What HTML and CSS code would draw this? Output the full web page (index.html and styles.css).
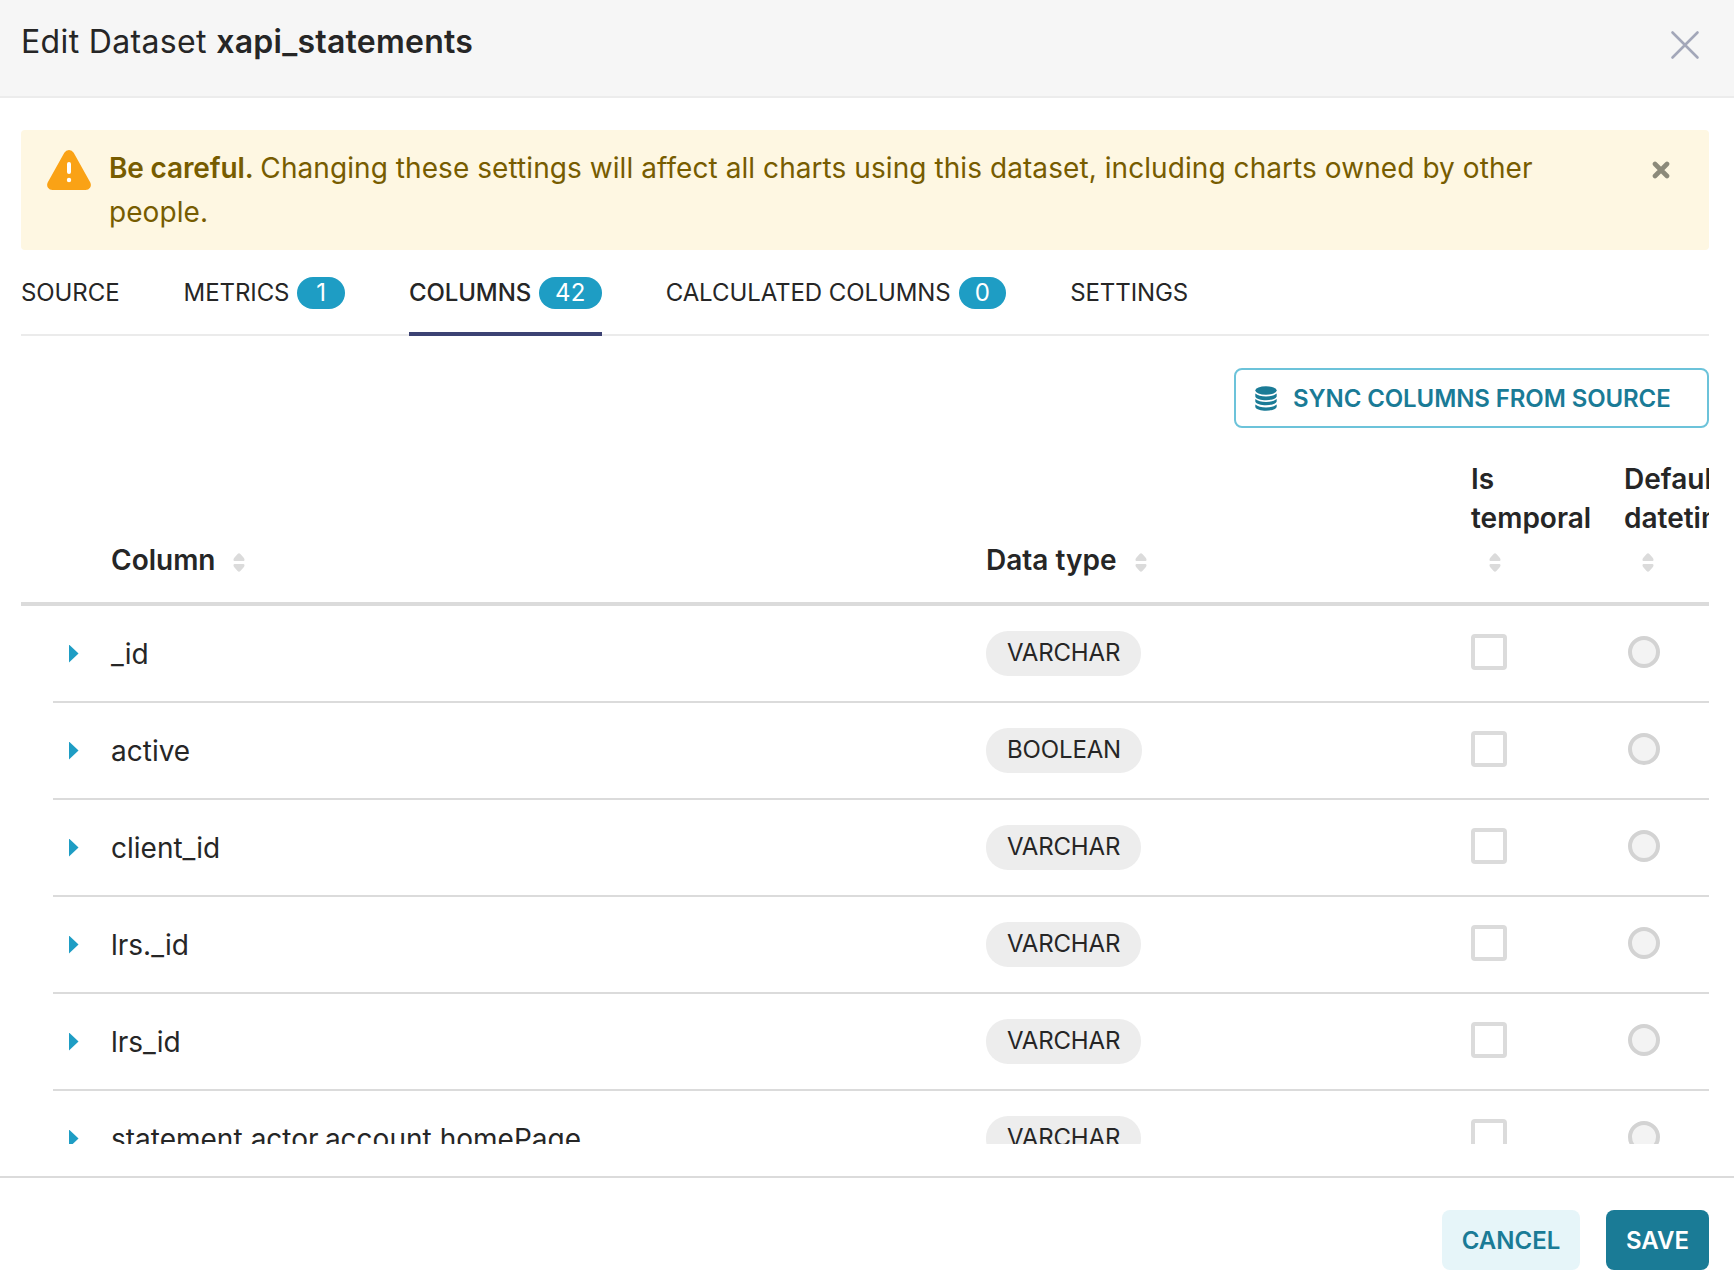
FILE: index.html
```html
<!DOCTYPE html>
<html lang="en">
<head>
<meta charset="utf-8">
<title>Edit Dataset xapi_statements</title>
<link rel="stylesheet" href="styles.css">
</head>
<body>
<svg class="defs" width="0" height="0">
  <symbol id="sorter" viewBox="0 0 12 20">
    <path d="M1.500 9C.6 9 .5 8 .5 7.400Q.6 6.500 1.500 5.500L4.600 2Q6 .7 7.400 2L10.500 5.500Q11.400 6.500 11.500 7.400C11.500 8 11.400 9 10.500 9ZM1.500 12C.6 12 .5 13 .5 13.600Q.6 14.500 1.500 15.500L4.600 19Q6 20.300 7.400 19L10.500 15.500Q11.400 14.500 11.500 13.600C11.500 13 11.400 12 10.500 12Z"/>
  </symbol>
</svg>
<main class="modal">
  <header class="modal-header">
    <h1 class="title">Edit Dataset <strong>xapi_statements</strong></h1>
    <button class="close" aria-label="Close">
      <svg width="30" height="30" viewBox="0 0 30 30"><path d="M2.500 2.500L27.500 27.500M27.500 2.500L2.500 27.500"/></svg>
    </button>
  </header>
  <section class="modal-body">
    <div class="alert">
      <svg class="alert-icon" width="44" height="40" viewBox="0 0 44 40">
        <path class="alert-shape" d="M17.300 2.800Q19 0 22 0T26.700 2.800L43.300 32.500Q44.600 35.500 43 37.800Q41.500 40 38.500 40H5.500Q2.500 40 1 37.800Q-.6 35.500 .7 32.500Z"/>
        <rect class="alert-mark" x="20" y="12" width="4" height="12" rx="2"/><circle class="alert-mark" cx="22" cy="30" r="2.200"/>
      </svg>
      <p class="alert-text"><strong>Be careful.</strong> Changing these settings will affect all charts using this dataset, including charts owned by other people.</p>
      <button class="alert-close" aria-label="Dismiss">
        <svg width="18" height="18" viewBox="0 0 18 18"><path d="M3 3L15 15M15 3L3 15"/></svg>
      </button>
    </div>
    <nav class="tabs">
      <a class="tab">SOURCE</a>
      <a class="tab">METRICS<span class="badge one">1</span></a>
      <a class="tab active">COLUMNS<span class="badge">42</span></a>
      <a class="tab">CALCULATED COLUMNS<span class="badge one">0</span></a>
      <a class="tab">SETTINGS</a>
    </nav>
    <div class="toolbar">
      <button class="btn sync">
        <svg width="22" height="25" viewBox="0 0 22 25"><ellipse cx="11" cy="4.500" rx="10.700" ry="4.200"/><path d="M.3 7.500Q4 10.500 11 10.500T21.700 7.500V10.500C20 15.500 2 15.500 .3 10.500ZM.3 13Q4 16 11 16T21.700 13V15.500C20 20.500 2 20.500 .3 15.500ZM.3 18.500Q4 21.500 11 21.500T21.700 18.500V21C20 26 2 26 .3 21Z"/></svg>
        <span>SYNC COLUMNS FROM SOURCE</span>
      </button>
    </div>
    <div class="table">
      <div class="row head">
        <span></span>
        <div class="th">Column<svg class="sort"><use href="#sorter"/></svg></div>
        <div class="th">Data type<svg class="sort wide"><use href="#sorter"/></svg></div>
        <div class="th stacked"><span>Is</span><span>temporal</span><svg class="sort"><use href="#sorter"/></svg></div>
        <div class="th stacked"><span>Default</span><span>datetime</span><svg class="sort"><use href="#sorter"/></svg></div>
      </div>
      <div class="row"><i class="caret"></i><span class="name">_id</span><span class="tag">VARCHAR</span><i class="check"></i><i class="radio"></i></div>
      <div class="row"><i class="caret"></i><span class="name">active</span><span class="tag">BOOLEAN</span><i class="check"></i><i class="radio"></i></div>
      <div class="row"><i class="caret"></i><span class="name">client_id</span><span class="tag">VARCHAR</span><i class="check"></i><i class="radio"></i></div>
      <div class="row"><i class="caret"></i><span class="name">lrs._id</span><span class="tag">VARCHAR</span><i class="check"></i><i class="radio"></i></div>
      <div class="row"><i class="caret"></i><span class="name">lrs_id</span><span class="tag">VARCHAR</span><i class="check"></i><i class="radio"></i></div>
      <div class="row"><i class="caret"></i><span class="name">statement.actor.account.homePage</span><span class="tag">VARCHAR</span><i class="check"></i><i class="radio"></i></div>
    </div>
  </section>
  <footer class="modal-footer">
    <button class="btn cancel">CANCEL</button>
    <button class="btn save">SAVE</button>
  </footer>
</main>
</body>
</html>
```
FILE: styles.css
```css
* { box-sizing: border-box; }
body {
  margin: 0;
  background: #fff;
  color: #262626;
  font-family: Inter, "Liberation Sans", sans-serif;
  font-size: 28px;
}
button { font: inherit; border: 0; background: none; padding: 0; margin: 0; }
svg { display: block; flex: none; }
.defs { position: absolute; }

.modal { height: 1288px; display: flex; flex-direction: column; overflow: hidden; }
.modal-header {
  flex: none;
  height: 98px;
  padding: 0 34px 0 21px;
  display: flex;
  justify-content: space-between;
  align-items: flex-start;
  background: #f6f6f6;
  border-bottom: 2px solid #ececec;
}
.title { margin: 22px 0 0; font-size: 32px; line-height: 40px; font-weight: 400; letter-spacing: .35px; }
.title strong { font-weight: 600; letter-spacing: .25px; }
.close { margin-top: 30px; }
.close path { stroke: #a3a7b9; stroke-width: 2.600; stroke-linecap: round; }

.modal-body {
  flex: none;
  height: 1046px;
  padding: 32px 25px 0 21px;
  overflow: hidden;
}
.alert {
  height: 120px;
  padding: 16px 39px 0 26px;
  display: flex;
  align-items: flex-start;
  border-radius: 4px;
  background: #fef7e2;
  color: #775c00;
}
.alert-icon { margin-top: 4px; }
.alert-shape { fill: #faa215; }
.alert-mark { fill: #fff; }
.alert-text { margin: 0 0 0 18px; width: 1480px; line-height: 44px; letter-spacing: .07px; }
.alert-text strong { font-weight: 600; letter-spacing: -.15px; margin-right: -1px; }
.alert-close { margin: 15px 0 0 auto; }
.alert-close path { stroke: #8c8a7a; stroke-width: 4.600; stroke-linecap: round; }

.tabs {
  height: 86px;
  display: flex;
  gap: 64px;
  border-bottom: 2px solid #ebebeb;
  font-size: 24px;
  letter-spacing: -.08px;
}
.tab { height: 86px; padding: 1px 0 2px; display: flex; align-items: center; white-space: nowrap; }
.tab.active { padding: 3px 0 0; font-weight: 500; letter-spacing: -.1px; border-bottom: 4px solid #3c4273; }
.badge {
  margin-left: 8px;
  height: 32px;
  padding: 0 16px;
  border-radius: 16px;
  background: #1e9dc4;
  color: #fff;
  font-weight: 400;
  letter-spacing: .2px;
  line-height: 32px;
}
.badge.one { width: 47.5px; text-align: center; }

.toolbar { height: 92px; padding-top: 32px; display: flex; justify-content: flex-end; }
.btn { height: 60px; border-radius: 8px; font-size: 24px; font-weight: 600; color: #1a7b96; }
.sync {
  width: 475px;
  padding-left: 19px;
  display: flex;
  align-items: center;
  gap: 16px;
  border: 2px solid #6cc3da;
  letter-spacing: -.1px;
  white-space: nowrap;
}
.sync svg { fill: #1a7b96; }

.table { overflow: hidden; }
.row {
  height: 97px;
  margin-left: 32px;
  padding-left: 16px;
  display: grid;
  grid-template-columns: 42px 875px 485px 153px 200px;
  align-items: center;
  border-bottom: 2px solid #dbdbdb;
}
.head {
  height: 178px;
  margin-left: 0;
  padding: 0 0 22px 48px;
  border-bottom-width: 4px;
  align-items: end;
  font-weight: 600;
}
.th { display: flex; align-items: center; line-height: 39px; }
.sort { width: 12px; height: 20px; margin: 3px 0 0 17px; fill: #dbdbdb; }
.sort.wide { margin-left: 19px; }
.stacked { flex-direction: column; align-items: flex-start; }
.stacked .sort { margin: 14px 0 8px 18px; }
.caret {
  width: 9.5px;
  height: 18px;
  background: #1e9dc4;
  clip-path: polygon(0 0, 100% 50%, 0 100%);
}
.tag {
  justify-self: start;
  height: 45px;
  padding: 0 21px;
  border-radius: 22px;
  background: #ededed;
  font-size: 24px;
  letter-spacing: -.15px;
  line-height: 43px;
}
.check { width: 36px; height: 36px; margin-bottom: 3px; border: 4px solid #dbdbdb; border-radius: 4px; }
.radio { width: 32px; height: 32px; margin: 0 0 3px 4px; border: 4px solid #d3d3d3; border-radius: 50%; background: #f3f3f3; }

.modal-footer {
  flex: none;
  height: 112px;
  margin-top: 32px;
  padding: 32px 25px 0;
  display: flex;
  justify-content: flex-end;
  gap: 26px;
  border-top: 2px solid #dbdbdb;
}
.cancel { width: 138px; background: #e6f5f9; }
.save { width: 103px; background: #1a7b96; color: #fff; }
```
